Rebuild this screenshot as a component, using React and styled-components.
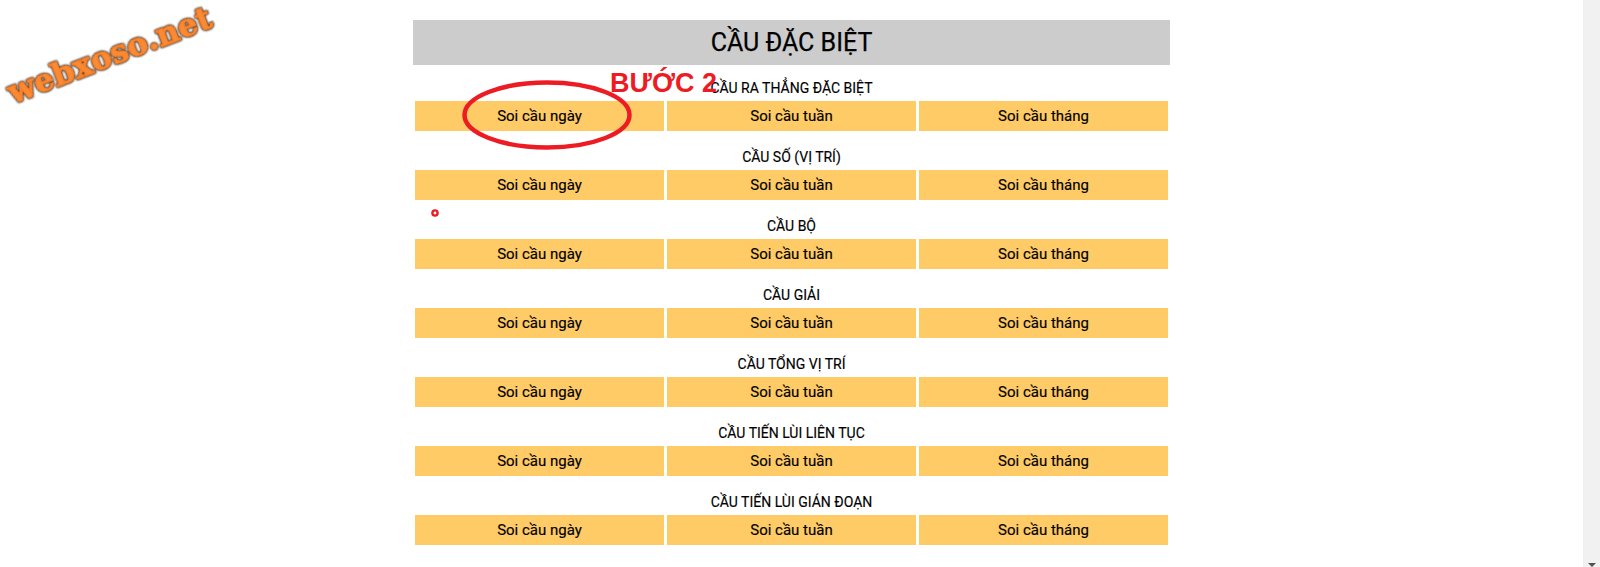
import styled, { createGlobalStyle } from "styled-components";

const GlobalStyle = createGlobalStyle`
  html, body {
    margin: 0;
    height: 567px;
    overflow: hidden;
    background: #fff;
    font-family: Roboto, "Liberation Sans", sans-serif;
    color: #000;
  }
`

const Page = styled.div`
  position: relative;
  display: flex;
  width: 1600px;
  height: 567px;
  overflow: hidden;
`

const Content = styled.main`
  flex: 1;
  display: flex;
  justify-content: center;
  padding-top: 20px;
`

const Panel = styled.section`
  width: 757px;
`

const Heading = styled.h1`
  margin: 0 0 14px;
  height: 45px;
  line-height: 45px;
  background: #ccc;
  text-align: center;
  font-size: 25px;
  font-weight: 400;
  -webkit-text-stroke: 0.25px #000;
`

const Group = styled.div`
  margin-bottom: 17px;
`

const GroupTitle = styled.h2`
  margin: 0;
  height: 22px;
  line-height: 19px;
  text-align: center;
  font-size: 14px;
  font-weight: 400;
  -webkit-text-stroke: 0.15px #000;
`

const LinkRow = styled.div`
  display: grid;
  grid-template-columns: repeat(3, 249px);
  gap: 3px;
  justify-content: center;
`

const SoiLink = styled.a`
  height: 30px;
  line-height: 30px;
  background: #fecb66;
  text-align: center;
  font-size: 15px;
  -webkit-text-stroke: 0.15px #000;
  cursor: pointer;
`

const Scrollbar = styled.div`
  position: relative;
  width: 17px;
  background: #f1f1f1;
`

const ScrollArrow = styled.span`
  position: absolute;
  left: 5px;
  bottom: 0;
  border-left: 4px solid transparent;
  border-right: 4px solid transparent;
  border-top: 4px solid #505050;
`

const Logo = styled.div`
  position: absolute;
  left: 2px;
  top: 35px;
  transform: rotate(-21deg);
  font-family: "DejaVu Serif", serif;
  font-size: 31px;
  font-weight: 700;
  line-height: 40px;
  letter-spacing: 0.3px;
  white-space: nowrap;
  color: #fb8a35;
  -webkit-text-stroke: 1.6px #f98028;
  filter: drop-shadow(0 0 0.8px #2e2a26) drop-shadow(0.5px 0.5px 0.4px #3a322c);
`

const StepLabel = styled.div`
  position: absolute;
  left: 610px;
  top: 68px;
  font-family: "Liberation Sans", sans-serif;
  font-size: 27px;
  font-weight: 700;
  color: #ed1c24;
`

const Mark = styled.svg`
  position: absolute;
  left: ${p => p.$x}px;
  top: ${p => p.$y}px;
`

const groups = [
  "CẦU RA THẲNG ĐẶC BIỆT",
  "CẦU SỐ (VỊ TRÍ)",
  "CẦU BỘ",
  "CẦU GIẢI",
  "CẦU TỔNG VỊ TRÍ",
  "CẦU TIẾN LÙI LIÊN TỤC",
  "CẦU TIẾN LÙI GIÁN ĐOẠN",
]

const links = ["Soi cầu ngày", "Soi cầu tuần", "Soi cầu tháng"]

export default function App() {
  return (
    <Page>
      <GlobalStyle />
      <Content>
        <Panel>
          <Heading>CẦU ĐẶC BIỆT</Heading>
          {groups.map(title => (
            <Group key={title}>
              <GroupTitle>{title}</GroupTitle>
              <LinkRow>
                {links.map(label => <SoiLink key={label}>{label}</SoiLink>)}
              </LinkRow>
            </Group>
          ))}
        </Panel>
      </Content>
      <Scrollbar><ScrollArrow /></Scrollbar>

      <Logo>webxoso.net</Logo>
      <StepLabel>BƯỚC 2</StepLabel>
      <Mark $x={460} $y={79} width="174" height="72" viewBox="0 0 174 72">
        <ellipse cx="87" cy="36" rx="82.5" ry="32.5" fill="none" stroke="#ed1c24" strokeWidth="4.5" />
      </Mark>
      <Mark $x={431} $y={209} width="8" height="8" viewBox="0 0 8 8">
        <circle cx="4" cy="4" r="2.6" fill="#fff" stroke="#ed1c24" strokeWidth="2.4" />
      </Mark>
    </Page>
  )
}
